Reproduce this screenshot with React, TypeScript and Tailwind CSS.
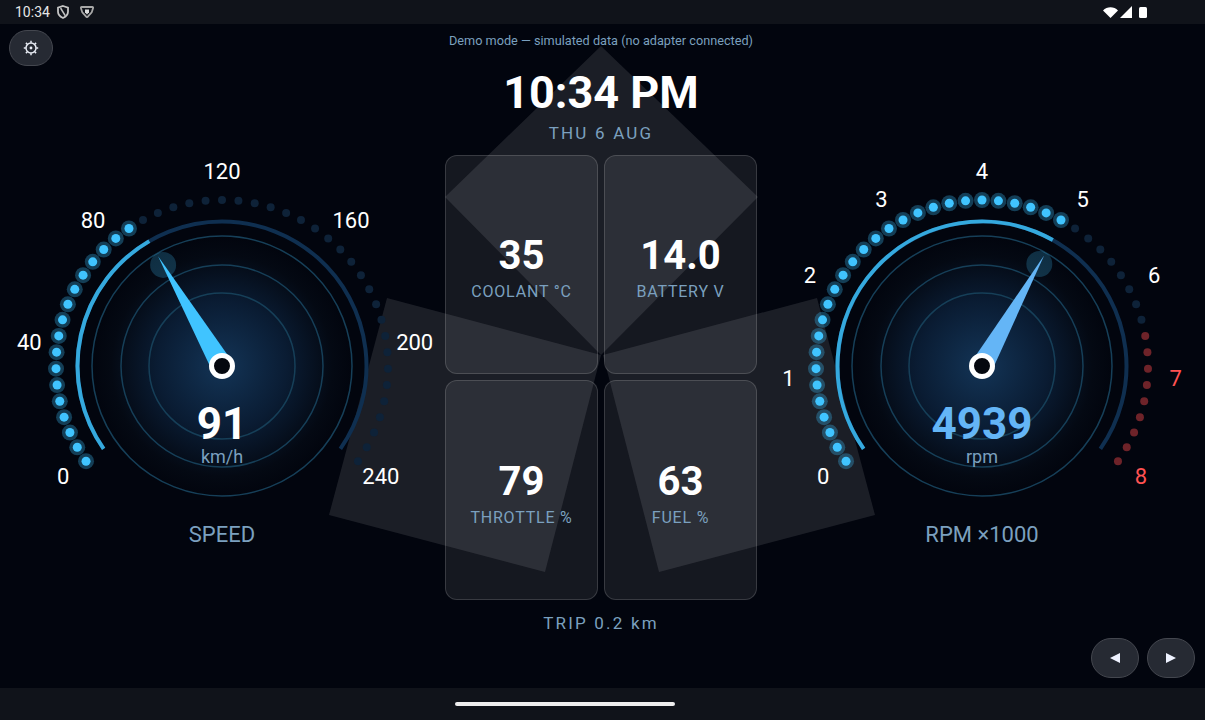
const DOTS = 45;
const SWEEP = 250;
const START = -125;
const CX = 210;
const CY = 210;

const polar = (r: number, deg: number) => {
  const a = (deg * Math.PI) / 180;
  return { x: CX + r * Math.sin(a), y: CY - r * Math.cos(a) };
};

const arcPath = (r: number, from: number, to: number) => {
  const a = polar(r, from);
  const b = polar(r, to);
  return `M${a.x} ${a.y}A${r} ${r} 0 ${to - from > 180 ? 1 : 0} 1 ${b.x} ${b.y}`;
};

type GaugeProps = {
  id: string;
  value: number;
  max: number;
  redFrom?: number;
  scale: { text: string; red?: boolean }[];
  unit: string;
  title: string;
  needle: string;
  valueClass: string;
};

function Gauge({ id, value, max, redFrom, scale, unit, title, needle, valueClass }: GaugeProps) {
  const frac = value / max;
  const angle = START + frac * SWEEP;
  const tip = polar(127, angle);
  const glow = polar(117, angle);
  const baseA = polar(11, angle - 90);
  const baseB = polar(11, angle + 90);

  return (
    <div className="flex flex-col items-center w-[420px]">
      <div className="relative w-[420px] h-[360px]">
        <svg width="420" height="360" viewBox="0 0 420 360" className="block overflow-visible">
          <defs>
            <radialGradient id={id}>
              <stop offset="0%" stopColor="#133456" />
              <stop offset="50%" stopColor="#0a1c33" />
              <stop offset="85%" stopColor="#040913" />
              <stop offset="100%" stopColor="#02050e" />
            </radialGradient>
          </defs>
          <circle cx={CX} cy={CY} r="130" fill={`url(#${id})`} stroke="#163f58" strokeWidth="1.5" />
          <circle cx={CX} cy={CY} r="101" fill="none" stroke="#163f58" strokeWidth="1.5" />
          <circle cx={CX} cy={CY} r="73" fill="none" stroke="#163f58" strokeWidth="1.5" />
          <path d={arcPath(144.5, START, START + SWEEP)} fill="none" stroke="#0f2f50" strokeWidth="4" />
          <path d={arcPath(144.5, START, angle)} fill="none" stroke="#35a9de" strokeWidth="4" />
          {Array.from({ length: DOTS }, (_, i) => {
            const p = polar(166, START + (i * SWEEP) / (DOTS - 1));
            const lit = i / (DOTS - 1) <= frac;
            const red = redFrom !== undefined && i / (DOTS - 1) >= redFrom;
            if (lit) {
              return (
                <g key={i}>
                  <circle cx={p.x} cy={p.y} r="8" fill="#40c4ff" fillOpacity="0.3" />
                  <circle cx={p.x} cy={p.y} r="4.5" fill="#40c4ff" />
                </g>
              );
            }
            return <circle key={i} cx={p.x} cy={p.y} r="4" fill={red ? "#6e2329" : "#0e2238"} />;
          })}
          {scale.map((s, i) => {
            const p = polar(194, START + (i * SWEEP) / (scale.length - 1));
            return (
              <text
                key={s.text}
                x={p.x}
                y={p.y + 7}
                textAnchor="middle"
                className={`text-[22px] ${s.red ? "fill-[#ff5252]" : "fill-white"}`}
              >
                {s.text}
              </text>
            );
          })}
          <circle cx={glow.x} cy={glow.y} r="13" fill="#40c4ff" fillOpacity="0.22" />
          <polygon points={`${tip.x},${tip.y} ${baseA.x},${baseA.y} ${baseB.x},${baseB.y}`} fill={needle} />
          <circle cx={CX} cy={CY} r="10.5" fill="#05080f" stroke="#ffffff" strokeWidth="5" />
        </svg>
        <div className="absolute inset-x-0 top-[246px] flex flex-col items-center">
          <div className={`text-[44px] leading-[44px] font-bold ${valueClass}`}>{Math.round(value)}</div>
          <div className="text-[18px] leading-[20px] mt-[1px] text-[#7ba0bf]">{unit}</div>
        </div>
      </div>
      <div className="mt-[5px] text-[22px] leading-[28px] text-[#7ba0bf]">{title}</div>
    </div>
  );
}

function Stat({ value, label }: { value: string; label: string }) {
  return (
    <div className="flex flex-col items-center justify-center pt-[6px] rounded-[12px] border border-white/15 bg-white/[0.08]">
      <div className="text-[40px] leading-[46px] font-bold text-white">{value}</div>
      <div className="mt-[3px] text-[16px] leading-[20px] tracking-[0.8px] text-[#7ba0bf]">{label}</div>
    </div>
  );
}

export default function App() {
  return (
    <div className="relative flex flex-col w-[1205px] h-[720px] overflow-hidden bg-[#02050e] font-['Roboto',sans-serif]">
      <div className="flex items-center justify-between h-[24px] px-[15px] bg-[#10131a] shrink-0">
        <div className="flex items-center">
          <span className="text-[14px] text-[#e6e6e6]">10:34</span>
          <svg width="12" height="14" viewBox="0 0 12 14" className="ml-[7px]">
            <path d="M6 1 11 2.6v4.2c0 2.8-2.1 4.9-5 6.2-2.9-1.3-5-3.4-5-6.2V2.6z" fill="none" stroke="#c4c4c4" strokeWidth="1.8" />
            <path d="M3.6 3.2 8.2 10.6" stroke="#c4c4c4" strokeWidth="1.6" />
          </svg>
          <svg width="14" height="12" viewBox="0 0 14 12" className="ml-[11px]">
            <path d="M1.6 1h10.8c.5 0 .8.5.7 1l-1.4 4.4L7.6 10.8c-.3.3-.9.3-1.2 0L2.3 6.4.9 2c-.1-.5.2-1 .7-1z" fill="none" stroke="#a8a8a8" strokeWidth="1.8" />
            <path d="M5 3.4h4v2.8L7 8.4 5 6.2z" fill="#dcdcdc" />
          </svg>
        </div>
        <div className="flex items-center mr-[43px]">
          <svg width="15" height="11" viewBox="0 0 15 11">
            <path d="M0 3.4C4-.9 11-.9 15 3.4L7.5 11z" fill="#ffffff" />
          </svg>
          <svg width="12" height="12" viewBox="0 0 12 12" className="ml-[2px]">
            <path d="M12 0v12H0z" fill="#ffffff" />
          </svg>
          <div className="ml-[7px] w-[8px] h-[11px] rounded-[1.5px] bg-white" />
        </div>
      </div>

      <svg width="1205" height="720" viewBox="0 0 1205 720" className="absolute inset-0 pointer-events-none">
        <g fill="#ffffff" fillOpacity="0.1">
          <polygon points="601,355 445,197 601,46 758,197" />
          <polygon points="601,355 387,298 329,515 545,572" />
          <polygon points="603,355 817,298 875,515 659,572" />
        </g>
      </svg>

      <div className="relative flex flex-1 min-h-0">
        <button className="absolute left-[9px] top-[6px] flex items-center justify-center w-[44px] h-[36px] rounded-full border border-[#44474f] bg-[#262a33]">
          <svg width="16" height="16" viewBox="0 0 16 16" fill="none" stroke="#e8ecf4">
            <circle cx="8" cy="8" r="5" strokeWidth="1.5" />
            <circle cx="8" cy="8" r="1.4" fill="#e8ecf4" stroke="none" />
            <path d="M8 .8v2M8 13.2v2M.8 8h2M13.2 8h2M2.9 2.9l1.4 1.4M11.7 11.7l1.4 1.4M13.1 2.9l-1.4 1.4M4.3 11.7l-1.4 1.4" strokeWidth="1.5" />
          </svg>
        </button>

        <div className="w-[445px] pl-[12px] pt-[132px]">
          <Gauge
            id="speedGlow"
            value={91}
            max={240}
            scale={["0", "40", "80", "120", "160", "200", "240"].map((text) => ({ text }))}
            unit="km/h"
            title="SPEED"
            needle="#40c4ff"
            valueClass="text-white"
          />
        </div>

        <div className="flex flex-col items-center w-[312px] pt-[9px]">
          <div className="text-[12.7px] leading-[16px] text-[#7ba0bf] whitespace-nowrap">
            Demo mode — simulated data (no adapter connected)
          </div>
          <div className="mt-[18px] text-[45px] leading-[52px] font-bold text-white whitespace-nowrap">10:34 PM</div>
          <div className="mt-[4px] text-[17px] leading-[20px] tracking-[2.2px] text-[#7ba0bf]">THU 6 AUG</div>
          <div className="mt-[12px] grid grid-cols-2 grid-rows-[219px_220px] gap-[6px] w-full">
            <Stat value="35" label="COOLANT °C" />
            <Stat value="14.0" label="BATTERY V" />
            <Stat value="79" label="THROTTLE %" />
            <Stat value="63" label="FUEL %" />
          </div>
          <div className="mt-[13px] text-[17px] leading-[20px] tracking-[2.2px] text-[#7ba0bf]">TRIP 0.2 km</div>
        </div>

        <div className="w-[448px] pl-[15px] pt-[132px]">
          <Gauge
            id="rpmGlow"
            value={4939}
            max={8000}
            redFrom={0.8}
            scale={[
              { text: "0" },
              { text: "1" },
              { text: "2" },
              { text: "3" },
              { text: "4" },
              { text: "5" },
              { text: "6" },
              { text: "7", red: true },
              { text: "8", red: true },
            ]}
            unit="rpm"
            title="RPM ×1000"
            needle="#64b5f6"
            valueClass="text-[#64b5f6]"
          />
        </div>

        <div className="absolute right-[10px] bottom-[10px] flex gap-[8px]">
          <button className="flex items-center justify-center w-[48px] h-[40px] rounded-full border border-[#44474f] bg-[#262a33]">
            <svg width="11" height="10" viewBox="0 0 11 10">
              <path d="M0 5 10 0v10z" fill="#eef2ff" />
            </svg>
          </button>
          <button className="flex items-center justify-center w-[48px] h-[40px] rounded-full border border-[#44474f] bg-[#262a33]">
            <svg width="11" height="10" viewBox="0 0 11 10">
              <path d="M10 5 0 0v10z" fill="#eef2ff" />
            </svg>
          </button>
        </div>
      </div>

      <div className="flex items-center h-[32px] pl-[455px] bg-[#10131a] shrink-0">
        <div className="w-[220px] h-[4px] rounded-full bg-[#eeeeee]" />
      </div>
    </div>
  );
}
